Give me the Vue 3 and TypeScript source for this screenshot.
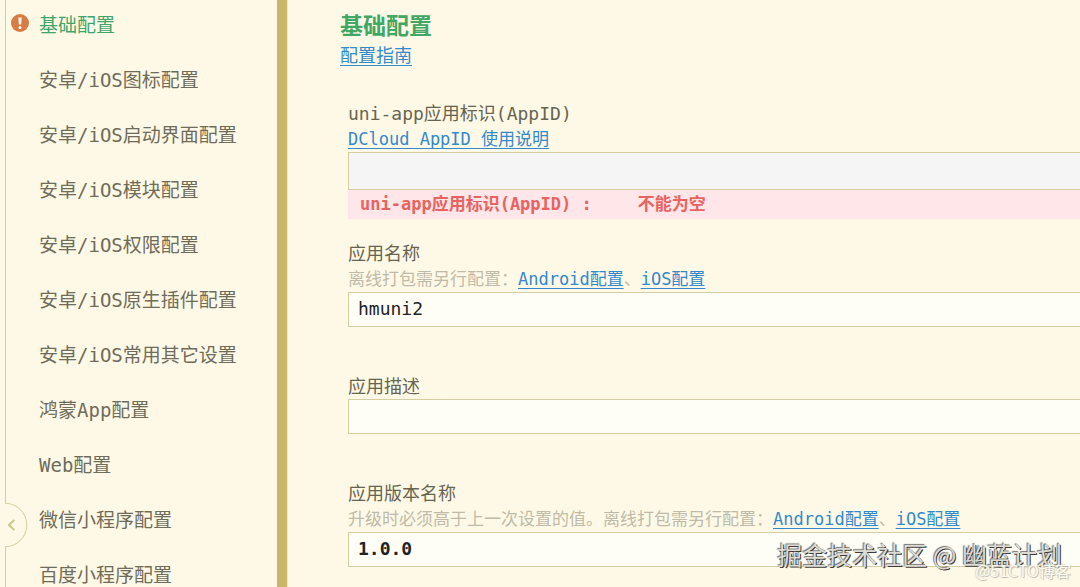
<script setup lang="ts">
import { ref } from 'vue'

interface HelpLink {
  text: string
}

interface Field {
  id: string
  label: string
  hint?: string
  links: HelpLink[]
  value: string
  disabled?: boolean
  strong?: boolean
  error?: string
}

const menu: string[] = [
  '基础配置',
  '安卓/iOS图标配置',
  '安卓/iOS启动界面配置',
  '安卓/iOS模块配置',
  '安卓/iOS权限配置',
  '安卓/iOS原生插件配置',
  '安卓/iOS常用其它设置',
  '鸿蒙App配置',
  'Web配置',
  '微信小程序配置',
  '百度小程序配置',
]

const active = ref(0)

const fields = ref<Field[]>([
  {
    id: 'appid',
    label: 'uni-app应用标识(AppID)',
    links: [{ text: 'DCloud AppID 使用说明' }],
    value: '',
    disabled: true,
    error: '不能为空',
  },
  {
    id: 'name',
    label: '应用名称',
    hint: '离线打包需另行配置：',
    links: [{ text: 'Android配置' }, { text: 'iOS配置' }],
    value: 'hmuni2',
  },
  { id: 'description', label: '应用描述', links: [], value: '' },
  {
    id: 'version',
    label: '应用版本名称',
    hint: '升级时必须高于上一次设置的值。离线打包需另行配置：',
    links: [{ text: 'Android配置' }, { text: 'iOS配置' }],
    value: '1.0.0',
    strong: true,
  },
])
</script>

<template>
  <div class="editor">
    <aside class="sidebar">
      <nav>
        <ul class="menu">
          <li v-for="(item, i) in menu" :key="item">
            <button
              type="button"
              class="menu-item"
              :class="{ active: i === active }"
              @click="active = i"
            >
              <span class="mark">
                <svg v-if="i === 0" width="18" height="18" viewBox="0 0 18 18" aria-hidden="true">
                  <circle cx="9" cy="9" r="9" fill="#d87c46" />
                  <path d="M7.3 3.6h3.4l-.5 6.9H7.8z" fill="#fff8e8" />
                  <circle cx="9" cy="13.4" r="1.5" fill="#fff8e8" />
                </svg>
              </span>
              <span>{{ item }}</span>
            </button>
          </li>
        </ul>
      </nav>
      <button type="button" class="collapse" aria-label="收起">
        <svg width="24" height="46" viewBox="0 0 24 46" aria-hidden="true">
          <rect x="0" y="1" width="2" height="44" fill="#fef9e6" />
          <path d="M0 1.2A21.8 21.8 0 0 1 0 44.8" fill="#fef9e6" stroke="#d3cd9f" stroke-width="1" />
          <path d="M9.3 18l-5.3 5 5.3 5" fill="none" stroke="#cdc58a" stroke-width="2" />
        </svg>
      </button>
    </aside>
    <div class="splitter"></div>
    <main class="content">
      <h1>基础配置</h1>
      <a class="guide link" href="#">配置指南</a>
      <form class="form" @submit.prevent>
        <div v-for="f in fields" :key="f.id" class="field" :class="{ invalid: f.error }">
          <label :for="f.id">{{ f.label }}</label>
          <p v-if="f.links.length" class="hint">
            <span v-if="f.hint">{{ f.hint }}</span><template v-for="(l, i) in f.links" :key="l.text"><span v-if="i > 0">、</span><a class="link" href="#">{{ l.text }}</a></template>
          </p>
          <input
            :id="f.id"
            v-model="f.value"
            type="text"
            :class="{ strong: f.strong }"
            :disabled="f.disabled"
          />
          <p v-if="f.error" class="error">
            <span>{{ f.label }} :</span><span>{{ f.error }}</span>
          </p>
        </div>
      </form>
    </main>
    <div class="watermark">掘金技术社区 @ 幽蓝计划</div>
    <div class="watermark-small">@51CTO博客</div>
  </div>
</template>

<style>
body {
  margin: 0;
  background: #fef9e6;
}
</style>

<style scoped>
.editor {
  position: relative;
  display: flex;
  height: 100vh;
  overflow: hidden;
  background: #fef9e6;
  font-family: 'DejaVu Sans Mono', 'Noto Sans CJK SC', monospace;
  color: #67644f;
}

.sidebar {
  position: relative;
  flex: none;
  box-sizing: border-box;
  width: 272px;
  margin-left: 5px;
  border-left: 1px solid #d3cda6;
}

.menu {
  margin: 0;
  padding: 0;
  list-style: none;
}

.menu-item {
  display: flex;
  align-items: center;
  width: 100%;
  height: 55px;
  margin: 0;
  padding: 0 0 0 5px;
  border: 0;
  background: none;
  color: #6f6c59;
  font-family: inherit;
  font-size: 19px;
  text-align: left;
  white-space: nowrap;
  cursor: pointer;
}

.menu li:first-child .menu-item {
  height: 51px;
  padding-bottom: 5px;
  box-sizing: border-box;
}

.menu-item.active {
  color: #3fa568;
}

.mark {
  display: flex;
  flex: none;
  width: 28px;
}

.collapse {
  position: absolute;
  left: -1px;
  top: 502px;
  display: flex;
  padding: 0;
  border: 0;
  background: none;
  cursor: pointer;
}

.splitter {
  flex: none;
  width: 10px;
  background: #cbb568;
  border-right: 1px solid #f9e3c6;
}

.content {
  flex: 1;
  min-width: 0;
  padding: 9px 0 0 52px;
}

h1 {
  margin: 0;
  color: #41a765;
  font-size: 23px;
  font-weight: 700;
  line-height: 34px;
}

.guide {
  display: block;
  width: max-content;
  font-size: 18px;
  line-height: 26px;
}

.link {
  color: #3489cb;
  text-decoration: underline;
  text-decoration-thickness: 1px;
  text-decoration-skip-ink: none;
  text-underline-offset: 3px;
}

.form {
  margin-top: 32px;
  padding-left: 8px;
}

.field {
  display: flex;
  flex-direction: column;
  margin-bottom: 47px;
}

.field.invalid {
  margin-bottom: 22px;
}

label {
  font-size: 18px;
  line-height: 25px;
}

p {
  margin: 0;
}

.hint {
  color: #bfbba8;
  font-size: 17px;
  line-height: 26px;
  white-space: nowrap;
}

input {
  box-sizing: border-box;
  width: 100%;
  height: 35px;
  margin: 0;
  padding: 0 9px 2px;
  border: 1px solid #d5cf9f;
  border-right: 0;
  border-radius: 0;
  outline: 0;
  background: #fffef6;
  color: #222;
  font-family: inherit;
  font-size: 18px;
}

input.strong {
  font-weight: 700;
}

input:disabled {
  height: 38px;
  background: #f5f5f6;
}

.error {
  display: flex;
  gap: 46px;
  padding-left: 12px;
  background: #fee6e9;
  color: #e8635f;
  font-size: 17px;
  font-weight: 700;
  line-height: 29px;
}

.watermark,
.watermark-small {
  position: absolute;
  font-family: 'Noto Sans CJK SC', sans-serif;
  white-space: nowrap;
  pointer-events: none;
}

.watermark {
  right: 18px;
  bottom: 15px;
  color: #dddbd4;
  font-size: 25px;
  line-height: 36px;
  text-shadow: 1px 1px 0 #3c3b37, -1px -1px 1px #77756e;
}

.watermark-small {
  right: 9px;
  bottom: 6px;
  color: #fdf9ec;
  font-size: 16px;
  line-height: 22px;
  text-shadow: 1px 1px 1px #bdb9ad, -1px 0 1px #d5d1c4;
}
</style>
